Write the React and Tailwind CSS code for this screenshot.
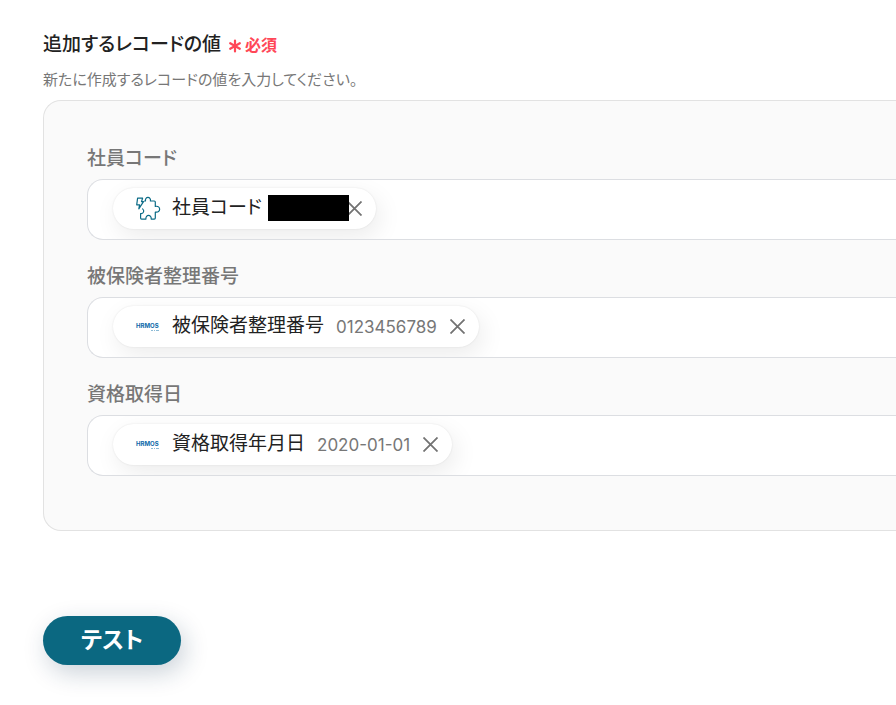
import React, { useState } from 'react';

const initialFields = [
  { id: 'employee_code', label: '社員コード', token: '社員コード', icon: 'puzzle', hidden: true },
  { id: 'insured_number', label: '被保険者整理番号', token: '被保険者整理番号', icon: 'hrmos', value: '0123456789' },
  { id: 'acquired_on', label: '資格取得日', token: '資格取得年月日', icon: 'hrmos', value: '2020-01-01' },
];

const PuzzleIcon = () => (
  <svg viewBox="0 0 26 26" className="size-[26px] shrink-0" fill="none" stroke="#0b6b86" strokeWidth="1.2" strokeLinejoin="round" strokeLinecap="round" aria-hidden="true">
    <path d="M9.5 5h1c-1-4.8 5.9-4.8 4.9 0h3.9c.7 0 1 .4 1 1v4.4c5.8-1.4 5.8 6.8 0 5.6v6.1c0 .7-.4 1-1 1h-3.1c.6-4.9-5.9-4.9-5.3 0H6.6c-.7 0-1-.4-1-1v-4.6c3.4.4 3.9-3.1 2-4.6" />
    <path d="M2.6 2.2h5L6.5 5.6h2L3.8 12.8 4.6 8.8H1.7z" />
  </svg>
);

const HrmosLogo = () => (
  <svg viewBox="0 0 26 26" className="size-[26px] shrink-0" role="img" aria-label="HRMOS">
    <text x="1" y="14" className="fill-[#0a68a8] font-['Inter'] text-[6px] font-bold">HRMOS</text>
    <path d="M16 16.5h2M19 16.5h1M21 16.5h3" stroke="#8dbbd6" strokeWidth="1" />
  </svg>
);

const CloseIcon = () => (
  <svg viewBox="0 0 16 16" className="size-[15px]" stroke="#737373" strokeWidth="1.9" aria-hidden="true">
    <path d="M.5.5l15 15M15.5.5l-15 15" />
  </svg>
);

const Token = ({ field, onRemove }) => (
  <span className="flex h-[41px] shrink-0 items-center rounded-full bg-white pr-3.5 pl-[22px] shadow-[0_0_2px_rgba(0,0,0,0.1),4px_8px_24px_rgba(0,0,0,0.08)]">
    {field.icon === 'puzzle' ? <PuzzleIcon /> : <HrmosLogo />}
    <span className="ml-[11px] pb-0.5 text-[19px] leading-6 text-[#222]">{field.token}</span>
    {field.hidden ? (
      <span className="z-10 mb-0.5 ml-1.5 h-[26px] w-[81px] bg-black" />
    ) : (
      <span className="ml-3 font-['Inter'] text-[17px] leading-6 text-[#777]">{field.value}</span>
    )}
    <button
      type="button"
      aria-label={`${field.token}を削除`}
      onClick={onRemove}
      className={field.hidden ? '-ml-0.5 cursor-pointer' : 'ml-[13px] cursor-pointer'}
    >
      <CloseIcon />
    </button>
  </span>
);

const RecordField = ({ field, onRemove }) => (
  <div>
    <label htmlFor={field.id} className="block text-[19px] leading-7 font-medium text-[#777]">
      {field.label}
    </label>
    <div className="mt-1.5 flex h-[61px] items-center overflow-hidden rounded-l-2xl border border-r-0 border-[#dcdee2] bg-white pr-6 pb-0.5 pl-[25px]">
      {!field.removed && <Token field={field} onRemove={onRemove} />}
      <input id={field.id} type="text" className="ml-2 h-10 min-w-0 flex-1 bg-transparent text-[19px] text-[#222] outline-none" />
    </div>
  </div>
);

export default function App() {
  const [fields, setFields] = useState(initialFields);

  const removeToken = (id) => {
    setFields(fields.map((field) => (field.id === id ? { ...field, removed: true } : field)));
  };

  return (
    <main className="bg-white pt-[29px] pb-10 pl-[43px] font-['Inter','Noto_Sans_CJK_JP',sans-serif] [font-feature-settings:'palt']">
      <h2 className="flex items-center text-[19px] leading-8 font-medium text-[#222]">
        追加するレコードの値
        <span className="ml-2 flex items-center gap-1 text-base font-bold text-[#ff4757]">
          <svg viewBox="0 0 12 14" className="mt-0.5 h-3.5 w-3" stroke="currentColor" strokeWidth="2.2" strokeLinecap="round" aria-hidden="true">
            <path d="M6 1.5v11M1.2 4.2l9.6 5.6M10.8 4.2L1.2 9.8" />
          </svg>
          必須
        </span>
      </h2>
      <p className="mt-[7px] text-[15px] leading-6 text-[#777]">新たに作成するレコードの値を入力してください。</p>

      <section className="mt-2 flex flex-col gap-[23px] rounded-l-[18px] border border-r-0 border-[#e2e2e2] bg-[#fafafa] pt-11 pb-[54px] pl-[43px]">
        {fields.map((field) => (
          <RecordField key={field.id} field={field} onRemove={() => removeToken(field.id)} />
        ))}
      </section>

      <button
        type="button"
        className="mt-[85px] h-[49px] cursor-pointer rounded-full bg-[#0b6881] px-[38px] text-[23px] font-bold text-white shadow-[4px_8px_24px_rgba(20,50,80,0.22)]"
      >
        テスト
      </button>
    </main>
  );
}
